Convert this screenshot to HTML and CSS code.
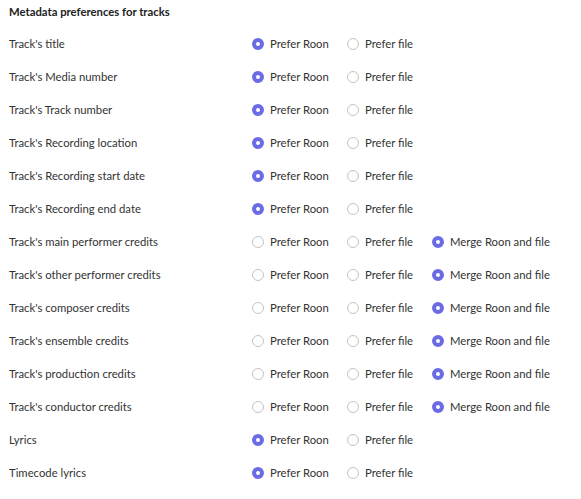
FILE: index.html
```html
<!DOCTYPE html>
<html>
<head>
<meta charset="utf-8">
<link rel="stylesheet" href="styles.css">
</head>
<body>
<div class="panel">
  <h1 class="title">Metadata preferences for tracks</h1>
  <div class="rows">
    <div class="row"><span class="label">Track's title</span><span class="opt"><i class="radio on"></i>Prefer Roon</span><span class="opt"><i class="radio"></i>Prefer file</span></div>
    <div class="row"><span class="label">Track's Media number</span><span class="opt"><i class="radio on"></i>Prefer Roon</span><span class="opt"><i class="radio"></i>Prefer file</span></div>
    <div class="row"><span class="label">Track's Track number</span><span class="opt"><i class="radio on"></i>Prefer Roon</span><span class="opt"><i class="radio"></i>Prefer file</span></div>
    <div class="row"><span class="label">Track's Recording location</span><span class="opt"><i class="radio on"></i>Prefer Roon</span><span class="opt"><i class="radio"></i>Prefer file</span></div>
    <div class="row"><span class="label">Track's Recording start date</span><span class="opt"><i class="radio on"></i>Prefer Roon</span><span class="opt"><i class="radio"></i>Prefer file</span></div>
    <div class="row"><span class="label">Track's Recording end date</span><span class="opt"><i class="radio on"></i>Prefer Roon</span><span class="opt"><i class="radio"></i>Prefer file</span></div>
    <div class="row"><span class="label">Track's main performer credits</span><span class="opt"><i class="radio"></i>Prefer Roon</span><span class="opt"><i class="radio"></i>Prefer file</span><span class="opt"><i class="radio on"></i>Merge Roon and file</span></div>
    <div class="row"><span class="label">Track's other performer credits</span><span class="opt"><i class="radio"></i>Prefer Roon</span><span class="opt"><i class="radio"></i>Prefer file</span><span class="opt"><i class="radio on"></i>Merge Roon and file</span></div>
    <div class="row"><span class="label">Track's composer credits</span><span class="opt"><i class="radio"></i>Prefer Roon</span><span class="opt"><i class="radio"></i>Prefer file</span><span class="opt"><i class="radio on"></i>Merge Roon and file</span></div>
    <div class="row"><span class="label">Track's ensemble credits</span><span class="opt"><i class="radio"></i>Prefer Roon</span><span class="opt"><i class="radio"></i>Prefer file</span><span class="opt"><i class="radio on"></i>Merge Roon and file</span></div>
    <div class="row"><span class="label">Track's production credits</span><span class="opt"><i class="radio"></i>Prefer Roon</span><span class="opt"><i class="radio"></i>Prefer file</span><span class="opt"><i class="radio on"></i>Merge Roon and file</span></div>
    <div class="row"><span class="label">Track's conductor credits</span><span class="opt"><i class="radio"></i>Prefer Roon</span><span class="opt"><i class="radio"></i>Prefer file</span><span class="opt"><i class="radio on"></i>Merge Roon and file</span></div>
    <div class="row"><span class="label">Lyrics</span><span class="opt"><i class="radio on"></i>Prefer Roon</span><span class="opt"><i class="radio"></i>Prefer file</span></div>
    <div class="row"><span class="label">Timecode lyrics</span><span class="opt"><i class="radio on"></i>Prefer Roon</span><span class="opt"><i class="radio"></i>Prefer file</span></div>
  </div>
</div>
</body>
</html>
```
FILE: styles.css
```css
html, body {
  margin: 0;
  padding: 0;
  background: #ffffff;
}
body {
  font-family: Lato, "Open Sans", sans-serif;
  color: #333333;
}
.panel {
  padding: 4px 0 0 9px;
}
.title {
  margin: 0;
  font-size: 11.3px;
  font-weight: 700;
  line-height: 16px;
  color: #222222;
}
.rows {
  margin-top: 7px;
}
.row {
  display: grid;
  grid-template-columns: 243px 95px 85px auto;
  align-items: center;
  height: 33px;
  font-size: 11.3px;
}
.label {
  white-space: nowrap;
}
.opt {
  display: flex;
  align-items: center;
  gap: 6px;
  white-space: nowrap;
}
.radio {
  display: block;
  box-sizing: border-box;
  width: 12px;
  height: 12px;
  border-radius: 50%;
  border: 1px solid #c4c4c4;
  background: #fff;
  flex: none;
}
.radio.on {
  border: 4px solid #6b6be6;
  background: #fff;
}
```
